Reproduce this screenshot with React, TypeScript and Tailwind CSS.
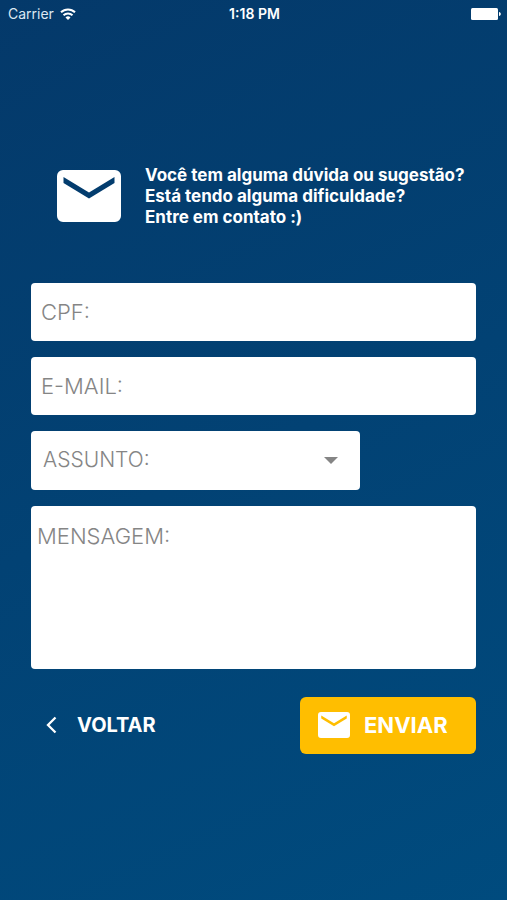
import { useState } from "react";
import type { FormEvent } from "react";

const SUBJECTS = ["Dúvida", "Sugestão", "Dificuldade"];

const FIELD_CLASS =
  "block w-full rounded bg-white font-light leading-7 text-[#858585] placeholder:text-[#858585] placeholder:opacity-100 outline-none";

function WifiIcon() {
  return (
    <svg viewBox="0 0 16 12" className="h-3 w-4" fill="none" stroke="#ffffff" strokeWidth="2" aria-hidden="true">
      <path d="M1 4.3C4.9.4 11.1.4 15 4.3" />
      <path d="M3.500 7.200c2.500-2.400 6.500-2.400 9 0" />
      <path d="M8 12 5.500 9.400a3.600 3.600 0 0 1 5 0z" fill="#ffffff" stroke="none" />
    </svg>
  );
}

function BatteryIcon() {
  return (
    <svg viewBox="0 0 30 12" className="h-3 w-[30px]" fill="currentColor" aria-hidden="true">
      <rect x="0" y="0" width="27" height="12" rx="1.5" />
      <path d="M28 4c1.200.3 1.800 1 1.800 2s-.6 1.700-1.800 2z" />
    </svg>
  );
}

function EnvelopeIcon({ className }: { className?: string }) {
  return (
    <svg viewBox="0 0 64 52" className={className} fill="currentColor" aria-hidden="true">
      <path
        fillRule="evenodd"
        d="M6 0h52a6 6 0 0 1 6 6v40a6 6 0 0 1-6 6H6a6 6 0 0 1-6-6V6a6 6 0 0 1 6-6zM6.500 7v6L32 28.500 57.500 13V7L32 22.500z"
      />
    </svg>
  );
}

function StatusBar() {
  return (
    <header className="grid h-7 grid-cols-3 items-center pl-2 pr-1.5 text-[14px] leading-5 text-[#dce8f2]">
      <div className="flex items-center gap-1.5">
        <span>Carrier</span>
        <WifiIcon />
      </div>
      <time className="text-center font-semibold text-white">1:18 PM</time>
      <div className="flex justify-end text-white">
        <BatteryIcon />
      </div>
    </header>
  );
}

export default function App() {
  const [subject, setSubject] = useState("");

  const handleSubmit = (e: FormEvent) => {
    e.preventDefault();
  };

  return (
    <div className="flex min-h-screen flex-col bg-linear-[155deg,#04396a,#004b7e] font-['Inter',sans-serif] text-white">
      <StatusBar />

      <main className="flex flex-1 flex-col justify-center px-[31px] pb-2.5">
        {/* Intro */}
        <div className="flex items-center gap-6 pl-[26px]">
          <EnvelopeIcon className="h-[52px] w-16 shrink-0" />
          <h1 className="whitespace-nowrap text-[17px] font-bold leading-[21px]">
            Você tem alguma dúvida ou sugestão?
            <br />
            Está tendo alguma dificuldade?
            <br />
            Entre em contato :)
          </h1>
        </div>

        <form onSubmit={handleSubmit} className="mt-[55px] flex flex-col gap-4">
          <input type="text" name="cpf" aria-label="CPF" placeholder="CPF:" className={`${FIELD_CLASS} h-[58px] px-2.5 text-[22px]`} />
          <input type="email" name="email" aria-label="E-mail" placeholder="E-MAIL:" className={`${FIELD_CLASS} h-[58px] px-2.5 text-[22px]`} />

          <div className="relative w-[74%]">
            <select
              name="subject"
              aria-label="Assunto"
              value={subject}
              onChange={(e) => setSubject(e.target.value)}
              className={`${FIELD_CLASS} h-[59px] appearance-none px-3 text-[21px]`}
            >
              <option value="">ASSUNTO:</option>
              {SUBJECTS.map((s) => (
                <option key={s} value={s}>
                  {s}
                </option>
              ))}
            </select>
            <svg
              viewBox="0 0 14 7"
              className="pointer-events-none absolute right-[22px] top-[26px] h-[7px] w-3.5"
              fill="#858585"
              aria-hidden="true"
            >
              <path d="M0 0h14L7 7z" />
            </svg>
          </div>

          <textarea
            name="message"
            aria-label="Mensagem"
            placeholder="MENSAGEM:"
            className={`${FIELD_CLASS} h-[163px] resize-none px-1.5 py-4 text-[22px]`}
          />

          {/* Actions */}
          <div className="mt-3 flex items-center justify-between font-bold">
            <button type="button" className="flex h-[57px] items-center gap-5 pl-[15px] text-[20px]">
              <svg viewBox="0 0 11 18" className="h-[18px] w-[11px]" fill="none" stroke="currentColor" strokeWidth="2.3" aria-hidden="true">
                <path d="M9.500 1.500 2 9l7.500 7.500" />
              </svg>
              VOLTAR
            </button>
            <button type="submit" className="flex h-[57px] w-44 items-center gap-3.5 rounded-md bg-[#ffbe00] pl-[18px] text-[22px]">
              <EnvelopeIcon className="h-[26px] w-8" />
              ENVIAR
            </button>
          </div>
        </form>
      </main>
    </div>
  );
}
